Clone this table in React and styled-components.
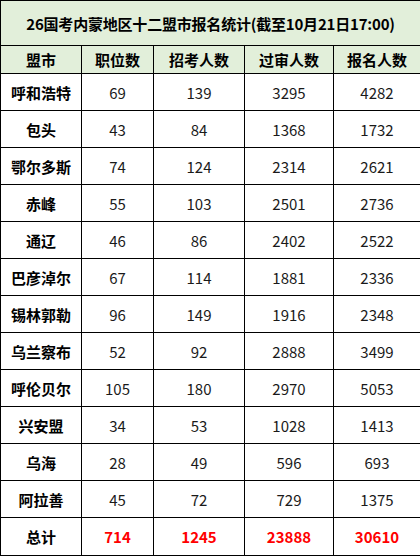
import React from "react";
import styled, { createGlobalStyle } from "styled-components";

const Global = createGlobalStyle`
  html, body { margin: 0; padding: 0; background: #fff; }
  body { font-family: "Noto Sans CJK SC", "Noto Sans", sans-serif; }
`;

const Table = styled.table`
  width: 420px;
  border-collapse: collapse;
  table-layout: fixed;
  font-family: "Noto Sans CJK SC", "Noto Sans", sans-serif;
  font-size: 15px;
  color: #1a1a1a;
`;

const Col = styled.col`
  width: ${(p) => p.$w}px;
`;

const TitleCell = styled.th`
  height: 44px;
  padding: 0;
  background: #e2efda;
  border: 1px solid #000;
  font-weight: 700;
  font-size: 15px;
  color: #000;
  text-align: center;
  letter-spacing: -0.2px;
`;

const HeadCell = styled.th`
  height: 27px;
  padding: 0;
  background: #e2efda;
  border: 1px solid #000;
  font-weight: 700;
  color: #000;
  text-align: center;
`;

const Cell = styled.td`
  height: 36px;
  padding: 0;
  border: 1px solid #000;
  text-align: center;
  font-weight: ${(p) => (p.$bold ? 700 : 400)};
  color: ${(p) => (p.$red ? "#ff0000" : p.$bold ? "#000" : "#1a1a1a")};
`;

const TotalCell = styled(Cell)`
  height: 37px;
`;

const rows = [
  ["呼和浩特", 69, 139, 3295, 4282],
  ["包头", 43, 84, 1368, 1732],
  ["鄂尔多斯", 74, 124, 2314, 2621],
  ["赤峰", 55, 103, 2501, 2736],
  ["通辽", 46, 86, 2402, 2522],
  ["巴彦淖尔", 67, 114, 1881, 2336],
  ["锡林郭勒", 96, 149, 1916, 2348],
  ["乌兰察布", 52, 92, 2888, 3499],
  ["呼伦贝尔", 105, 180, 2970, 5053],
  ["兴安盟", 34, 53, 1028, 1413],
  ["乌海", 28, 49, 596, 693],
  ["阿拉善", 45, 72, 729, 1375],
];

const headers = ["盟市", "职位数", "招考人数", "过审人数", "报名人数"];
const widths = [81, 72, 91, 89, 87];

export default function App() {
  return (
    <>
      <Global />
      <Table>
        <colgroup>
          {widths.map((w, i) => (
            <Col key={i} $w={w} />
          ))}
        </colgroup>
        <thead>
          <tr>
            <TitleCell colSpan={5}>26国考内蒙地区十二盟市报名统计(截至10月21日17:00)</TitleCell>
          </tr>
          <tr>
            {headers.map((h) => (
              <HeadCell key={h}>{h}</HeadCell>
            ))}
          </tr>
        </thead>
        <tbody>
          {rows.map((r) => (
            <tr key={r[0]}>
              <Cell $bold>{r[0]}</Cell>
              {r.slice(1).map((v, i) => (
                <Cell key={i}>{v}</Cell>
              ))}
            </tr>
          ))}
          <tr>
            <TotalCell $bold>总计</TotalCell>
            <TotalCell $bold $red>714</TotalCell>
            <TotalCell $bold $red>1245</TotalCell>
            <TotalCell $bold $red>23888</TotalCell>
            <TotalCell $bold $red>30610</TotalCell>
          </tr>
        </tbody>
      </Table>
    </>
  );
}
